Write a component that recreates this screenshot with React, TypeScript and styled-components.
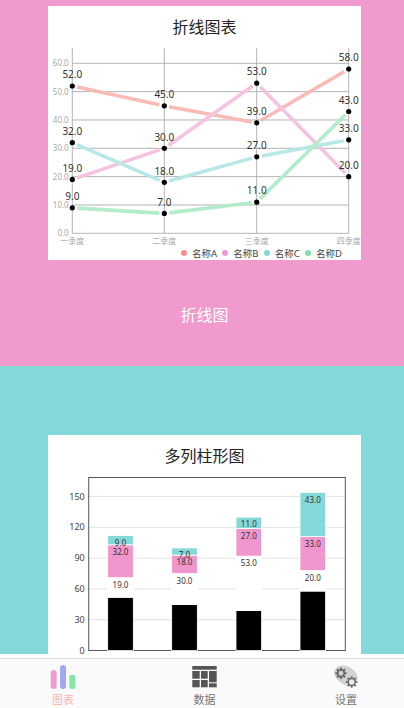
import React from "react";
import styled, { createGlobalStyle } from "styled-components";

const FONT = `"Noto Sans", "Noto Sans CJK SC", sans-serif`;

const quarters = ["一季度", "二季度", "三季度", "四季度"];

const series = [
  { name: "名称A", line: "#f9bbb5", dot: "#f58f88", data: [52, 45, 39, 58] },
  { name: "名称B", line: "#f5c3e2", dot: "#f09ccf", data: [19, 30, 53, 20] },
  { name: "名称C", line: "#b5e8e7", dot: "#84d8d8", data: [32, 18, 27, 33] },
  { name: "名称D", line: "#b3ecca", dot: "#7fe2a8", data: [9, 7, 11, 43] },
];

const LINE_X = [24.3, 116.3, 208.7, 300.7];
const LINE_ZERO = 185.3;
const LINE_UNIT = 2.833;

const lineY = (v: number) => LINE_ZERO - v * LINE_UNIT;

const LineChart = () => (
  <svg width="313" height="198" viewBox="0 0 313 198" style={{ display: "block" }}>
    {[0, 10, 20, 30, 40, 50, 60].map((v) => (
      <g key={v}>
        <line x1={LINE_X[0]} x2={LINE_X[3]} y1={lineY(v)} y2={lineY(v)} stroke="#ababab" strokeWidth="0.9" />
        <ChartText x={20.7} y={lineY(v) + 3} textAnchor="end" fontSize="8" fill="#a9a9a9">
          {v.toFixed(1)}
        </ChartText>
      </g>
    ))}
    {LINE_X.map((x, i) => (
      <g key={x}>
        <line x1={x} x2={x} y1={0} y2={LINE_ZERO} stroke="#ababab" strokeWidth="0.9" />
        <ChartText x={x} y={196} textAnchor="middle" fontSize="8" fill="#a9a9a9">
          {quarters[i]}
        </ChartText>
      </g>
    ))}
    {series.map((s) =>
      s.data.slice(1).map((v, i) => {
        const x1 = LINE_X[i];
        const x2 = LINE_X[i + 1];
        const y1 = lineY(s.data[i]);
        const y2 = lineY(v);
        const len = Math.hypot(x2 - x1, y2 - y1);
        const dx = ((x2 - x1) / len) * 5;
        const dy = ((y2 - y1) / len) * 5;
        return (
          <line
            key={s.name + i}
            x1={x1 + dx}
            y1={y1 + dy}
            x2={x2 - dx}
            y2={y2 - dy}
            stroke={s.line}
            strokeWidth="3.6"
          />
        );
      })
    )}
    {series.map((s) =>
      s.data.map((v, i) => (
        <g key={s.name + i}>
          <circle cx={LINE_X[i]} cy={lineY(v)} r="2.6" fill="#000" />
          <ChartText x={LINE_X[i]} y={lineY(v) - 7.8} textAnchor="middle" fontSize="10" fill="#333">
            {v.toFixed(1)}
          </ChartText>
        </g>
      ))
    )}
  </svg>
);

const BAR_X = [59.7, 123.7, 188, 252];
const BAR_W = 25.6;
const BAR_ZERO = 173.6;
const BAR_UNIT = 1.0267;

const barColors = ["#000000", "#ffffff", "#ef97cd", "#84d9d8"];

const BarChart = () => (
  <svg width="313" height="190" viewBox="0 0 313 190" style={{ display: "block" }}>
    {[0, 30, 60, 90, 120, 150].map((v) => {
      const y = BAR_ZERO - v * BAR_UNIT;
      return (
        <g key={v}>
          {v > 0 && <line x1={40} x2={297} y1={y} y2={y} stroke="#e2e2e2" strokeWidth="1" />}
          <ChartText x={36.7} y={y + 3} textAnchor="end" fontSize="9" fill="#444">
            {v}
          </ChartText>
        </g>
      );
    })}
    <rect x={40.7} y={0.5} width={256.6} height={173} fill="none" stroke="#555" strokeWidth="1" />
    {BAR_X.map((x, col) => {
      let base = 0;
      return (
        <g key={x}>
          {series.map((s, row) => {
            const v = s.data[col];
            const h = v * BAR_UNIT;
            const y = BAR_ZERO - (base + v) * BAR_UNIT;
            base += v;
            return (
              <g key={s.name}>
                <rect x={x} y={y} width={BAR_W} height={h} fill={barColors[row]} stroke="#fff" strokeWidth="0.8" />
                {row > 0 && (
                  <ChartText x={x + BAR_W / 2} y={y + 10.2} textAnchor="middle" fontSize="8" fill="#333">
                    {v.toFixed(1)}
                  </ChartText>
                )}
              </g>
            );
          })}
        </g>
      );
    })}
  </svg>
);

const ChartIcon = () => (
  <svg width="26" height="25" viewBox="0 0 26 25">
    <rect x="0.7" y="5" width="6" height="19" rx="3" fill="#f09ccf" />
    <rect x="10" y="0" width="6" height="24" rx="3" fill="#9fa9f1" />
    <rect x="19.3" y="9.7" width="6" height="14.3" rx="2.5" fill="#86e6a6" />
  </svg>
);

const TableIcon = () => (
  <svg width="26" height="25" viewBox="0 0 26 25" fill="#565656">
    <rect x="0.3" y="1" width="24.4" height="3.7" />
    <rect x="0.3" y="6" width="7.4" height="7.7" />
    <rect x="9" y="6" width="6.7" height="7.7" />
    <rect x="17" y="6" width="7.7" height="11.3" />
    <rect x="0.3" y="15" width="7.4" height="7.3" />
    <rect x="9" y="15" width="6.7" height="7.3" />
    <rect x="17" y="18.3" width="7.7" height="4" />
  </svg>
);

const gearTeeth = (cx: number, cy: number, r: number) =>
  Array.from({ length: 8 }, (_, i) => {
    const a = (i * Math.PI) / 4;
    return (
      <line
        key={i}
        x1={cx + Math.cos(a) * r}
        y1={cy + Math.sin(a) * r}
        x2={cx + Math.cos(a) * (r + 1.8)}
        y2={cy + Math.sin(a) * (r + 1.8)}
        strokeWidth="1.9"
      />
    );
  });

const GearIcon = () => (
  <svg width="26" height="25" viewBox="0 0 26 25" fill="none" stroke="#6a6a6a">
    <ellipse cx="13" cy="10.5" rx="12.5" ry="9" transform="rotate(30 13 10.5)" fill="#d2d2d2" stroke="none" />
    <circle cx="8" cy="8.3" r="3.4" strokeWidth="1.9" />
    {gearTeeth(8, 8.3, 3.9)}
    <circle cx="18.7" cy="17" r="3.4" strokeWidth="1.5" fill="#ececec" />
    {gearTeeth(18.7, 17, 3.9)}
  </svg>
);

const App = () => (
  <Screen>
    <GlobalStyle />
    <Main>
      <LineSection>
        <Card>
          <CardTitle>折线图表</CardTitle>
          <LineChart />
          <Legend>
            {series.map((s) => (
              <LegendItem key={s.name}>
                <LegendDot $color={s.dot} />
                {s.name}
              </LegendItem>
            ))}
          </Legend>
        </Card>
        <Caption>折线图</Caption>
      </LineSection>
      <BarSection>
        <Card>
          <CardTitle>多列柱形图</CardTitle>
          <BarChart />
        </Card>
      </BarSection>
    </Main>
    <TabBar>
      <TabRow>
        <Tab $color="#f9b5b0">
          <ChartIcon />
          图表
        </Tab>
        <Tab>
          <TableIcon />
          数据
        </Tab>
        <Tab>
          <GearIcon />
          设置
        </Tab>
      </TabRow>
    </TabBar>
  </Screen>
);

const GlobalStyle = createGlobalStyle`
  html, body {
    margin: 0;
    padding: 0;
    background: #fff;
    font-family: ${FONT};
  }
`;

const ChartText = styled.text`
  font-family: ${FONT};
`;

const Screen = styled.div`
  width: 404px;
  height: 708px;
  display: flex;
  flex-direction: column;
  overflow: hidden;
`;

const Main = styled.div`
  flex: 1;
  min-height: 0;
  overflow: hidden;
`;

const LineSection = styled.section`
  height: 366px;
  box-sizing: border-box;
  padding: 6px 0 0 5px;
  background: #f09acd;
  display: flex;
  flex-direction: column;
  align-items: center;
`;

const BarSection = styled.section`
  height: 300px;
  box-sizing: border-box;
  padding: 68.5px 0 0 5px;
  background: #83d9d8;
  display: flex;
  flex-direction: column;
  align-items: center;
`;

const Card = styled.div`
  width: 313px;
  background: #fff;
  flex-shrink: 0;
`;

const CardTitle = styled.div`
  height: 42px;
  line-height: 42px;
  text-align: center;
  font-size: 16px;
  color: #222;
`;

const Legend = styled.div`
  display: flex;
  justify-content: flex-end;
  gap: 5.3px;
  height: 14px;
  padding-right: 19px;
  font-size: 9.5px;
  line-height: 13px;
  color: #444;
`;

const LegendItem = styled.div`
  display: flex;
  align-items: center;
  gap: 5px;
`;

const LegendDot = styled.span<{ $color: string }>`
  width: 6px;
  height: 6px;
  border-radius: 50%;
  background: ${(p) => p.$color};
`;

const Caption = styled.div`
  margin-top: 43px;
  font-size: 16px;
  line-height: 24px;
  color: #fff;
`;

const TabBar = styled.div`
  height: 54px;
  flex-shrink: 0;
  box-sizing: border-box;
  padding-top: 4px;
  background: #fff;
`;

const TabRow = styled.div`
  height: 50px;
  box-sizing: border-box;
  border-top: 1px solid #dcdcdc;
  background: #fafafa;
  display: flex;
  justify-content: space-between;
  padding: 6px 24px 0 29px;
`;

const Tab = styled.div<{ $color?: string }>`
  width: 68px;
  display: flex;
  flex-direction: column;
  align-items: center;
  gap: 3px;
  font-size: 11px;
  line-height: 14px;
  color: ${(p) => p.$color ?? "#777"};
`;

export default App;
